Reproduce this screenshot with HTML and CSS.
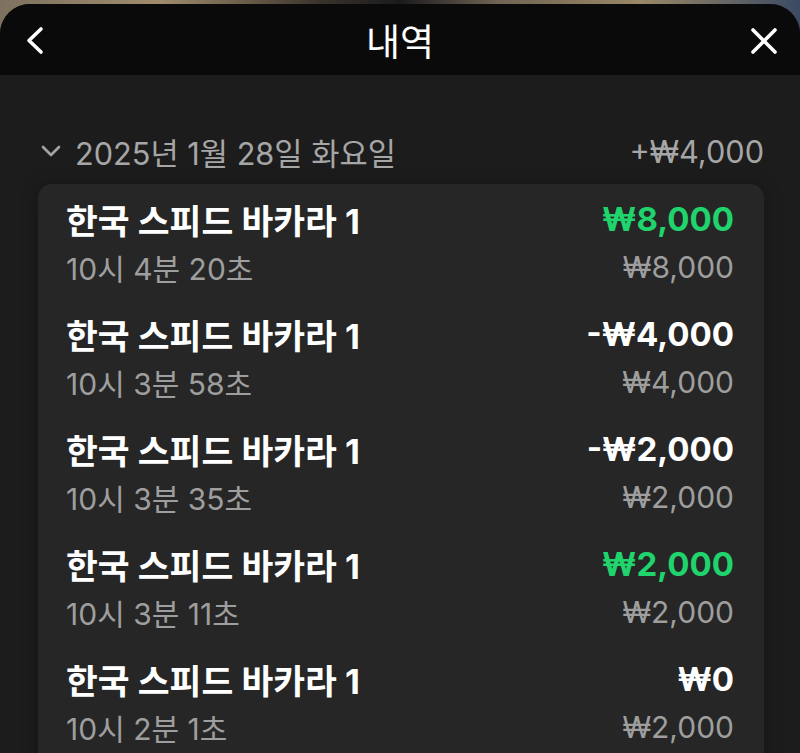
FILE: index.html
```html
<!DOCTYPE html>
<html lang="ko">
<head>
<meta charset="utf-8">
<link rel="stylesheet" href="styles.css">
</head>
<body>
<div class="panel">
  <header class="topbar">
    <svg class="icon back" width="24" height="32" viewBox="0 0 24 32"><path d="M17 4 L5 15.5 L17 27" fill="none" stroke="#fff" stroke-width="3.6" stroke-linecap="round" stroke-linejoin="round"/></svg>
    <h1 class="title">내역</h1>
    <svg class="icon close" width="32" height="32" viewBox="0 0 32 32"><path d="M5 5 L27 27 M27 5 L5 27" fill="none" stroke="#fff" stroke-width="3.6" stroke-linecap="round"/></svg>
  </header>
  <main class="content">
    <div class="date-row">
      <div class="date-left">
        <svg class="chev" width="20" height="12" viewBox="0 0 20 12"><path d="M2 2 L10 10 L18 2" fill="none" stroke="#a3a3a3" stroke-width="2.6" stroke-linecap="round" stroke-linejoin="round"/></svg>
        <span>2025년 1월 28일 화요일</span>
      </div>
      <span class="date-total">+₩4,000</span>
    </div>
    <section class="card">
      <div class="row">
        <div class="line"><span class="game">한국 스피드 바카라 1</span><span class="amt win">₩8,000</span></div>
        <div class="line sub"><span>10시 4분 20초</span><span>₩8,000</span></div>
      </div>
      <div class="row">
        <div class="line"><span class="game">한국 스피드 바카라 1</span><span class="amt">-₩4,000</span></div>
        <div class="line sub"><span>10시 3분 58초</span><span>₩4,000</span></div>
      </div>
      <div class="row">
        <div class="line"><span class="game">한국 스피드 바카라 1</span><span class="amt">-₩2,000</span></div>
        <div class="line sub"><span>10시 3분 35초</span><span>₩2,000</span></div>
      </div>
      <div class="row">
        <div class="line"><span class="game">한국 스피드 바카라 1</span><span class="amt win">₩2,000</span></div>
        <div class="line sub"><span>10시 3분 11초</span><span>₩2,000</span></div>
      </div>
      <div class="row">
        <div class="line"><span class="game">한국 스피드 바카라 1</span><span class="amt">₩0</span></div>
        <div class="line sub"><span>10시 2분 1초</span><span>₩2,000</span></div>
      </div>
    </section>
  </main>
</div>
</body>
</html>
```
FILE: styles.css
```css
* { box-sizing: border-box; }
html, body {
  margin: 0;
  height: 100%;
  overflow: hidden;
}
body {
  background: linear-gradient(90deg, #7d725f 0%, #a08c6c 20%, #3a332b 40%, #1a1a1e 50%, #6f6352 62%, #9a8866 80%, #3b4a63 100%);
  font-family: Inter, "Noto Sans CJK KR", sans-serif;
  padding-top: 4px;
}
.panel {
  height: 749px;
  border-radius: 30px 30px 0 0;
  overflow: hidden;
  background: #1c1c1c;
  display: flex;
  flex-direction: column;
}
.topbar {
  flex: 0 0 71px;
  height: 71px;
  background: #0a0a0a;
  display: flex;
  align-items: center;
  justify-content: space-between;
  padding: 2px 20px 0 24px;
  position: relative;
}
.title {
  margin: 0;
  font-family: "Noto Sans CJK KR", sans-serif;
  font-size: 37px;
  font-weight: 400;
  color: #fff;
  position: absolute;
  left: 0;
  right: 0;
  text-align: center;
  top: 12px;
  line-height: 48px;
  pointer-events: none;
}
.icon { display: block; }
.content {
  flex: 1;
  padding: 56px 36px 0 38px;
}
.date-row {
  display: flex;
  justify-content: space-between;
  align-items: center;
  height: 40px;
  color: #a6a6a6;
  font-size: 30.7px;
  margin-bottom: 13px;
}
.date-left {
  display: flex;
  align-items: center;
  gap: 14px;
  padding-left: 3px;
}
.chev { display: block; }
.card {
  background: #262626;
  border-radius: 14px;
  padding: 11px 30px 0 28px;
  height: 600px;
  box-shadow: 0 0 18px rgba(0,0,0,0.25);
}
.row {
  display: flex;
  flex-direction: column;
  margin-bottom: 19px;
}
.line {
  display: flex;
  justify-content: space-between;
  align-items: center;
  height: 48px;
  font-size: 33px;
  font-weight: 700;
  color: #fff;
}
.game { font-size: 34.6px; }
.amt.win { color: #20d36c; }
.line.sub {
  font-size: 30px;
  font-weight: 400;
  color: #9e9e9e;
}
```
